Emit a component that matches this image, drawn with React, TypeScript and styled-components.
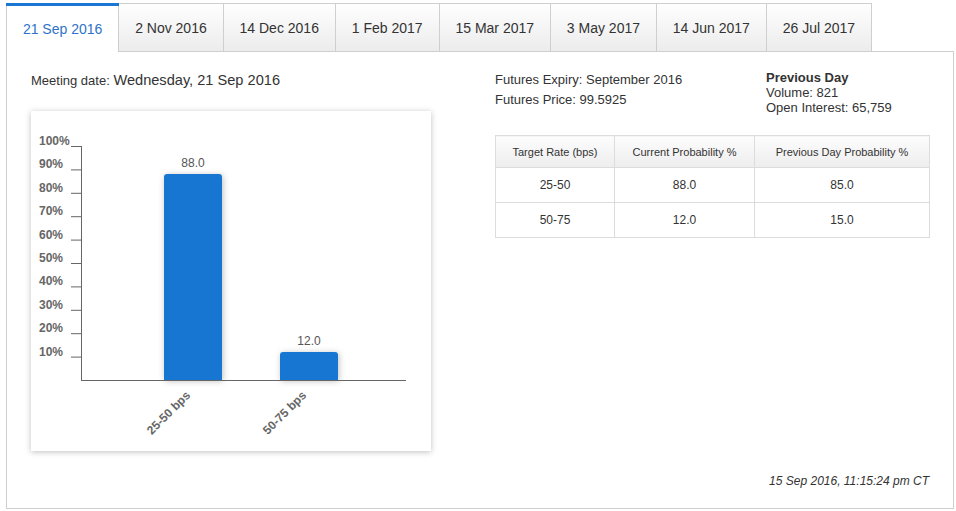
import React from "react";
import styled, { createGlobalStyle } from "styled-components";

const GlobalStyle = createGlobalStyle`
  html, body { margin: 0; padding: 0; background: #fff; }
  body { font-family: "Liberation Sans", Arial, sans-serif; color: #333; }
`;

const Page = styled.div`
  padding: 3px 2px 2px 6px;
  width: 948px;
`;

const TabRow = styled.div`
  display: flex;
  align-items: flex-start;
  height: 48px;
`;

const Tab = styled.div<{ $active?: boolean }>`
  position: relative;
  box-sizing: border-box;
  height: ${(p) => (p.$active ? "49px" : "48px")};
  padding: 0 15.92px;
  margin-left: -1px;
  border: 1px solid #cfcfcf;
  border-bottom: none;
  display: flex;
  align-items: center;
  font-size: 14px;
  line-height: 16px;
  padding-top: ${(p) => (p.$active ? "2px" : "0")};
  color: ${(p) => (p.$active ? "#2f74c8" : "#333")};
  background: ${(p) => (p.$active ? "#fff" : "linear-gradient(#fefefe, #ececec)")};
  z-index: ${(p) => (p.$active ? 2 : 1)};
  &:first-child { margin-left: 0; }
  &::before {
    content: "";
    display: ${(p) => (p.$active ? "block" : "none")};
    position: absolute;
    left: -1px;
    right: -1px;
    top: -1px;
    height: 3px;
    background: #1976d2;
  }
`;

const Panel = styled.div`
  position: relative;
  z-index: 1;
  box-sizing: border-box;
  border: 1px solid #cfcfcf;
  height: 458px;
  padding: 18px 24px 0;
  display: flex;
  flex-direction: column;
`;

const TopGrid = styled.div`
  display: grid;
  grid-template-columns: 400px 434px;
  column-gap: 64px;
`;

const LeftCol = styled.div`
  display: flex;
  flex-direction: column;
`;

const MeetingLine = styled.div`
  font-size: 13px;
  line-height: 20px;
  height: 20px;
  white-space: nowrap;
`;

const MeetingDate = styled.span`
  font-size: 14.6px;
`;

const ChartCard = styled.div`
  margin-top: 21px;
  width: 400px;
  height: 340px;
  background: #fff;
  box-shadow: 0 1px 6px rgba(0, 0, 0, 0.25);
`;

const RightCol = styled.div`
  display: flex;
  flex-direction: column;
`;

const InfoRow = styled.div`
  display: grid;
  grid-template-columns: 271px 1fr;
`;

const FuturesBlock = styled.div`
  font-size: 13px;
  line-height: 20px;
`;

const PrevBlock = styled.div`
  font-size: 13px;
  line-height: 15px;
`;

const PrevTitle = styled.div`
  font-weight: bold;
`;

const Table = styled.table`
  margin-top: 20px;
  width: 434px;
  border-collapse: collapse;
  table-layout: fixed;
`;

const Th = styled.th`
  height: 31px;
  padding: 0;
  font-size: 11px;
  font-weight: normal;
  color: #333;
  text-align: center;
  border: 1px solid #dcdcdc;
  background: linear-gradient(#fdfdfd, #ededed);
`;

const Td = styled.td`
  height: 34px;
  padding: 0;
  font-size: 12px;
  color: #333;
  text-align: center;
  border: 1px solid #dcdcdc;
`;

const Footer = styled.div`
  margin-top: 23px;
  text-align: right;
  font-size: 12px;
  line-height: 14px;
  font-style: italic;
  color: #333;
`;

const ticks = [100, 90, 80, 70, 60, 50, 40, 30, 20, 10];
const TOP = 35;
const BASE = 269;
const SPAN = BASE - TOP;

const bars = [
  { label: "25-50 bps", value: 88.0, x: 133 },
  { label: "50-75 bps", value: 12.0, x: 249 },
];

function Chart() {
  return (
    <svg width="400" height="340" viewBox="0 0 400 340">
      <defs>
        <filter id="barShadow" x="-30%" y="-30%" width="160%" height="160%">
          <feDropShadow dx="1" dy="1" stdDeviation="3" floodColor="#000" floodOpacity="0.25" />
        </filter>
      </defs>
      {ticks.map((t) => {
        const y = BASE - (t / 100) * SPAN;
        return (
          <g key={t}>
            <line x1={40} x2={50} y1={y + 0.5} y2={y + 0.5} stroke="#666" strokeWidth={1} />
            <text
              x={8}
              y={y - 1}
              fontSize={12}
              fontWeight="bold"
              fill="#666"
              fontFamily="Liberation Sans, Arial, sans-serif"
            >
              {t}%
            </text>
          </g>
        );
      })}
      <line x1={50.5} x2={50.5} y1={TOP} y2={BASE + 1} stroke="#666" strokeWidth={1} />
      {bars.map((b) => {
        const h = (b.value / 100) * SPAN;
        const cx = b.x + 29;
        const lx = cx - 2;
        const ly = BASE + 16;
        return (
          <g key={b.label}>
            <path
              d={`M${b.x} ${BASE} V${BASE - h + 3} Q${b.x} ${BASE - h} ${b.x + 3} ${BASE - h} H${b.x + 55} Q${b.x + 58} ${BASE - h} ${b.x + 58} ${BASE - h + 3} V${BASE} Z`}
              fill="#1976d2"
              filter="url(#barShadow)"
            />
            <text
              x={cx}
              y={BASE - h - 7}
              textAnchor="middle"
              fontSize={12}
              fill="#555"
              fontFamily="Liberation Sans, Arial, sans-serif"
            >
              {b.value.toFixed(1)}
            </text>
            <text
              x={lx}
              y={ly}
              textAnchor="end"
              fontSize={12}
              fontWeight="bold"
              fill="#666"
              transform={`rotate(-45 ${lx} ${ly})`}
              fontFamily="Liberation Sans, Arial, sans-serif"
            >
              {b.label}
            </text>
          </g>
        );
      })}
      <line x1={50} x2={375} y1={BASE + 0.5} y2={BASE + 0.5} stroke="#666" strokeWidth={1} />
    </svg>
  );
}

const tabs = [
  "21 Sep 2016",
  "2 Nov 2016",
  "14 Dec 2016",
  "1 Feb 2017",
  "15 Mar 2017",
  "3 May 2017",
  "14 Jun 2017",
  "26 Jul 2017",
];

const rows = [
  ["25-50", "88.0", "85.0"],
  ["50-75", "12.0", "15.0"],
];

export default function App() {
  return (
    <>
      <GlobalStyle />
      <Page>
        <TabRow>
          {tabs.map((t, i) => (
            <Tab key={t} $active={i === 0}>
              {t}
            </Tab>
          ))}
        </TabRow>
        <Panel>
          <TopGrid>
            <LeftCol>
              <MeetingLine>
                Meeting date: <MeetingDate>Wednesday, 21 Sep 2016</MeetingDate>
              </MeetingLine>
              <ChartCard>
                <Chart />
              </ChartCard>
            </LeftCol>
            <RightCol>
              <InfoRow>
                <FuturesBlock>
                  <div>Futures Expiry: September 2016</div>
                  <div>Futures Price: 99.5925</div>
                </FuturesBlock>
                <PrevBlock>
                  <PrevTitle>Previous Day</PrevTitle>
                  <div>Volume: 821</div>
                  <div>Open Interest: 65,759</div>
                </PrevBlock>
              </InfoRow>
              <Table>
                <colgroup>
                  <col style={{ width: "119px" }} />
                  <col style={{ width: "140px" }} />
                  <col style={{ width: "175px" }} />
                </colgroup>
                <thead>
                  <tr>
                    <Th>Target Rate (bps)</Th>
                    <Th>Current Probability %</Th>
                    <Th>Previous Day Probability %</Th>
                  </tr>
                </thead>
                <tbody>
                  {rows.map((r) => (
                    <tr key={r[0]}>
                      {r.map((c, j) => (
                        <Td key={j}>{c}</Td>
                      ))}
                    </tr>
                  ))}
                </tbody>
              </Table>
            </RightCol>
          </TopGrid>
          <Footer>15 Sep 2016, 11:15:24 pm CT</Footer>
        </Panel>
      </Page>
    </>
  );
}
